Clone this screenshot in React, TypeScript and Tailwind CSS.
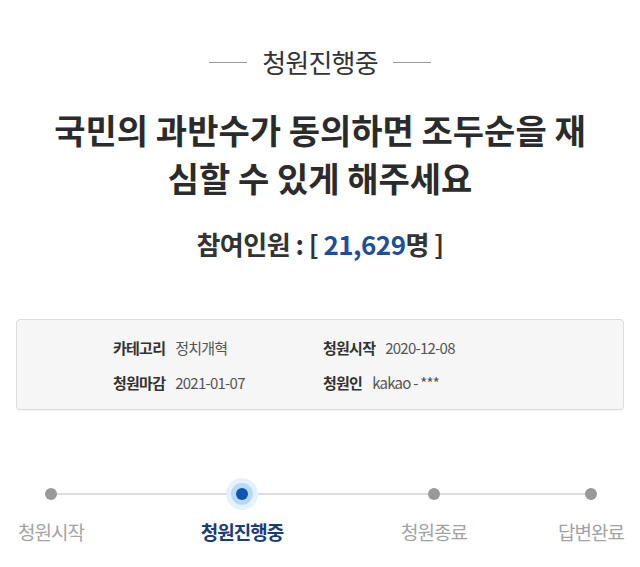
const font = { fontFamily: '"Noto Sans CJK KR", "Noto Sans", sans-serif' };

interface StepProps {
    label: string;
    active?: boolean;
    className: string;
}
function Step({ label, active, className }: StepProps) {
    return (
        <div className={`relative flex w-[98px] flex-col items-center ${className}`}>
            <div className="flex h-[34px] w-[34px] items-center justify-center">
                {active ? (
                    <div className="flex h-[32px] w-[32px] items-center justify-center rounded-full bg-[#e6f1fe]">
                        <div className="flex h-[22px] w-[22px] items-center justify-center rounded-full bg-[#b9d9fb]">
                            <div className="h-[12px] w-[12px] rounded-full bg-[#0b55b3]" />
                        </div>
                    </div>
                ) : (
                    <div className="h-[12px] w-[12px] rounded-full bg-[#999999]" />
                )}
            </div>
            <div
                className={`mt-[8px] whitespace-nowrap text-[19px] leading-[26px] tracking-[-0.05em] ${
                    active ? "font-bold tracking-[-0.03em] text-[#1b3c78]" : "text-[#a3a3a3]"
                }`}
            >
                {label}
            </div>
        </div>
    );
}

interface InfoProps {
    label: string;
    value: string;
}
function Info({ label, value }: InfoProps) {
    return (
        <div className="flex items-center gap-[10px] text-[15px] leading-[22px] tracking-[-0.05em]">
            <span className="font-bold text-[#333333]">{label}</span>
            <span className="text-[#555555]">{value}</span>
        </div>
    );
}

export default function App() {
    return (
        <div className="min-h-[567px] w-[640px] overflow-hidden bg-white pt-[46px]" style={font}>
            <div className="flex items-center justify-center">
                <div className="h-px w-[38px] bg-[#999999]" />
                <h2 className="mx-[15px] text-[26px] leading-[32px] tracking-[-0.03em] text-[#333333]">
                    청원진행중
                </h2>
                <div className="h-px w-[38px] bg-[#999999]" />
            </div>

            <h1 className="mt-[28px] whitespace-nowrap text-center text-[34px] font-bold leading-[48px] text-[#2b2b2b]">
                국민의 과반수가 동의하면 조두순을 재
                <br />
                심할 수 있게 해주세요
            </h1>

            <div className="mt-[26px] text-center text-[26px] font-bold leading-[32px] tracking-[-0.02em] text-[#333333]">
                참여인원 : [ <span className="text-[#1d4e9a]">21,629</span>명 ]
            </div>

            <div className="mx-[16px] mt-[59px] h-[91px] rounded-[4px] border border-[#dcdcdc] bg-[#f6f6f6] pl-[96px] pt-[17px] shadow-[0_1px_1px_rgba(0,0,0,0.04)]">
                <div className="grid grid-cols-[210px_210px] gap-y-[13px]">
                    <Info label="카테고리" value="정치개혁" />
                    <Info label="청원시작" value="2020-12-08" />
                    <Info label="청원마감" value="2021-01-07" />
                    <Info label="청원인" value="kakao - ***" />
                </div>
            </div>

            <div className="relative mt-[67px] flex">
                <div className="absolute left-[51px] top-[16px] h-[2px] w-[540px] bg-[#dddddd]" />
                <Step label="청원시작" className="ml-[2px]" />
                <Step label="청원진행중" active className="ml-[93px]" />
                <Step label="청원종료" className="ml-[94px]" />
                <Step label="답변완료" className="ml-[59px]" />
            </div>
        </div>
    );
}
